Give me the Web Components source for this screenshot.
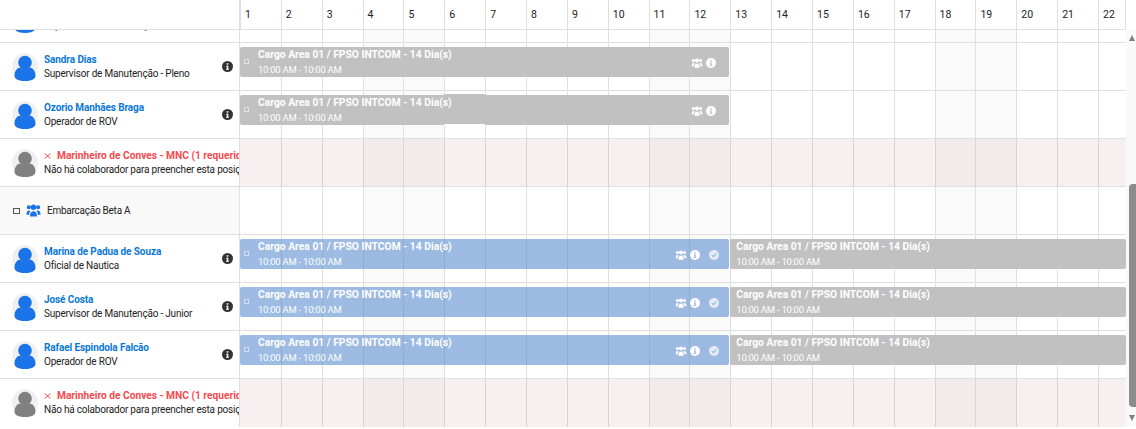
<!DOCTYPE html>
<html lang="pt"><head><meta charset="utf-8"><title>Escala</title>
<style>
html,body{margin:0;padding:0;background:#fff;overflow:hidden}
body{width:1136px;height:429px;font-family:Roboto,"Open Sans",sans-serif;color:#333}
</style></head><body>
<x-app>
  <x-header slot="header"></x-header>
  <x-row slot="rows" kind="person" name="Sandra Dias" role="Supervisor de Manutenção" first></x-row>
  <x-row slot="rows" kind="person" name="Sandra Dias" role="Supervisor de Manutenção - Pleno" bars="grey-full"></x-row>
  <x-row slot="rows" kind="person" name="Ozorio Manhães Braga" role="Operador de ROV" bars="grey-full" step></x-row>
  <x-row slot="rows" kind="vacant"></x-row>
  <x-row slot="rows" kind="group" name="Embarcação Beta A"></x-row>
  <x-row slot="rows" kind="person" name="Marina de Padua de Souza" role="Oficial de Nautica" bars="blue"></x-row>
  <x-row slot="rows" kind="person" name="José Costa" role="Supervisor de Manutenção - Junior" bars="blue"></x-row>
  <x-row slot="rows" kind="person" name="Rafael Espindola Falcão" role="Operador de ROV" bars="blue"></x-row>
  <x-row slot="rows" kind="vacant" last></x-row>
</x-app>
<script>
const COLS = 22, SHADE = new Set([4,5,11,12,18,19]), CW = 40.86;
const groupPath = 'M4 3a2.500 2.500 0 1 0 5 0a2.500 2.500 0 1 0-5 0zM.3 3a1.900 1.900 0 1 0 3.800 0a1.900 1.900 0 1 0-3.800 0zM8.900 3a1.900 1.900 0 1 0 3.800 0a1.900 1.900 0 1 0-3.800 0zM0 9.500c0-2.300 1-3.500 2.400-3.500.6 0 1 .2 1.400.5-.9.8-1.300 2-1.300 3.500H.5c-.3 0-.5-.2-.5-.5zM3.300 11c0-2.800 1.300-4.400 3.200-4.400S9.700 8.200 9.700 11c0 .4-.2.6-.6.6H3.900c-.4 0-.6-.2-.6-.6zM13 9.500c0-2.300-1-3.500-2.400-3.500-.6 0-1 .2-1.400.5.9.8 1.300 2 1.300 3.500h2c.3 0 .5-.2.5-.5z';
const infoSvg = (fg, bg, s) => `<svg width="${s}" height="${s}" viewBox="0 0 10 10" aria-hidden="true"><circle cx="5" cy="5" r="5" fill="${bg}"/><rect x="4.300" y="2" width="1.400" height="1.400" fill="${fg}"/><path d="M3.800 4.300h1.900v2.800h.6v.9H3.700v-.9h.7V5.200h-.6z" fill="${fg}"/></svg>`;
const sheet = css => `<style>${css}</style>`;

class XApp extends HTMLElement {
  constructor(){super();this.attachShadow({mode:'open'}).innerHTML = sheet(`
    :host{display:flex;width:1136px;height:429px;overflow:hidden;position:relative}
    .main{width:1126px;display:flex;flex-direction:column;flex:none}
    .rows{height:399px;overflow:hidden}
    x-scroll{flex:none}
  `)+`<div class="main"><slot name="header"></slot><div class="rows"><slot name="rows"></slot></div></div><x-scroll></x-scroll>`;}
}
class XScroll extends HTMLElement {
  constructor(){super();this.attachShadow({mode:'open'}).innerHTML = sheet(`
    :host{display:flex;flex-direction:column;width:10px;height:429px;box-sizing:border-box;padding:35px 0 8px 3px;background:linear-gradient(#fff 0 30px,#f9f9f9 30px 426px,#fff 426px)}
    .up,.down{width:0;height:0;border-left:3.500px solid transparent;border-right:3.500px solid transparent}
    .up{border-bottom:6px solid #808080}
    .down{border-top:6px solid #808080;margin-top:8px}
    .gap{height:143px}
    .thumb{height:223px;background:#8c8c8c;border-radius:4px 0 0 4px}
  `)+`<div class="up"></div><div class="gap"></div><div class="thumb"></div><div class="down"></div>`;}
}
class XHeader extends HTMLElement {
  constructor(){super();
    const cells = Array.from({length:COLS},(_,i)=>`<div class="c">${i+1}</div>`).join('');
    this.attachShadow({mode:'open'}).innerHTML = sheet(`
    :host{display:flex;height:30px;box-sizing:border-box;border-bottom:1px solid #e0e0e0;flex:none;overflow:hidden;border-right:1px solid #e0e0e0}
    .l{width:240px;flex:none;box-sizing:border-box;border-right:1px solid #e0e0e0}
    .c{width:${CW}px;flex:none;box-sizing:border-box;border-left:1px solid #e0e0e0;padding:8px 0 0 4px;font-size:10.500px;line-height:14px;color:#222}
    .c:first-of-type{border-left:0;padding-left:5px}
  `)+`<div class="l"></div>${cells}`;}
}
class XAvatar extends HTMLElement {
  constructor(){super();
    const col = this.getAttribute('color')||'#1a73e8';
    this.attachShadow({mode:'open'}).innerHTML = sheet(`:host{display:block;width:26px;height:28px;flex:none}svg{display:block}`)+
    `<svg width="26" height="28" viewBox="0 0 26 28" aria-hidden="true"><ellipse cx="13" cy="14" rx="13" ry="14" fill="#f0f0f0"/><circle cx="13" cy="9.500" r="6.800" fill="${col}"/><path d="M2.500 23c0-5.500 3-8.500 6-8.500 1.200.9 2.800 1.400 4.500 1.400s3.300-.5 4.500-1.400c3 0 6 3 6 8.500 0 3-4.500 5-10.500 5S2.500 26 2.500 23z" fill="${col}"/></svg>`;}
}
class XInfo extends HTMLElement {
  constructor(){super();this.attachShadow({mode:'open'}).innerHTML = sheet(`:host{display:block;width:11px;height:11px;flex:none}svg{display:block}`)+infoSvg('#fff','#333',11);}
}
class XBar extends HTMLElement {
  constructor(){super();
    const blue = this.hasAttribute('blue'), check = this.hasAttribute('check'), icons = this.hasAttribute('icons'), box = this.hasAttribute('box'), step=this.hasAttribute('step');
    const bg = blue ? 'rgba(59,119,199,.5)' : '#c1c1c1';
    const grp = `<svg class="g" width="12" height="10" viewBox="0 0 13 12" aria-hidden="true"><path d="${groupPath}" fill="#fff"/></svg>`;
    const chk = `<svg class="k" width="10" height="10" viewBox="0 0 10 10" aria-hidden="true"><circle cx="5" cy="5" r="5" fill="#e4ebf6"/><path d="M2.800 5.100l1.600 1.500 2.800-3" fill="none" stroke="${'#9dbbe3'}" stroke-width="1.200"/></svg>`;
    this.attachShadow({mode:'open'}).innerHTML = sheet(`
    :host{position:absolute;top:4px;height:30px;left:${this.getAttribute('x')}px;width:${this.getAttribute('w')}px;display:flex;align-items:center;box-sizing:border-box;background:${bg};border-radius:2px;color:#fff;padding-right:${check?10:13}px}
    .box{width:5px;height:5px;box-sizing:border-box;border:1px solid rgba(255,255,255,.55);position:absolute;left:4px;top:12px}
    .t{position:absolute;left:${box?18:6}px;top:1px;white-space:nowrap}
    .a{font-size:10.300px;font-weight:700;line-height:14px}
    .b{font-size:9.500px;line-height:14px;margin-top:1px;letter-spacing:-.25px}
    .ic{margin-left:auto;display:flex;align-items:center;gap:3px;margin-top:1px}
    .g{display:block}.i,.k{display:block}
    .k{margin-left:6px}
    .step{position:absolute;left:204.300px;width:40.900px;top:-1px;height:30px;background:#c1c1c1}
    .step::after{content:"";position:absolute;left:0;right:0;top:30px;height:1px;background:#fff}
  `)+(step?'<div class="step"></div>':'')+(box?'<div class="box"></div>':'')+
    `<div class="t"><div class="a">Cargo Area 01 / FPSO INTCOM - 14 Dia(s)</div><div class="b">10:00 AM - 10:00 AM</div></div>`+
    (icons?`<div class="ic">${grp}<span class="i">${infoSvg(blue?'#9dbbe3':'#c1c1c1','#fff',10)}</span>${check?chk:''}</div>`:'');}
}
class XRow extends HTMLElement {
  constructor(){super();
    const kind=this.getAttribute('kind'), name=this.getAttribute('name')||'', role=this.getAttribute('role')||'', bars=this.getAttribute('bars'), step=this.hasAttribute('step');
    const cells = Array.from({length:COLS},(_,i)=>`<div class="c${SHADE.has(i+1)?' s':''}"></div>`).join('');
    let left='';
    if(kind==='person') left=`<x-avatar></x-avatar><div class="tx"><div class="n">${name}</div><div class="r">${role}</div></div><x-info></x-info>`;
    if(kind==='vacant') left=`<x-avatar color="#808080"></x-avatar><div class="tx"><div class="n red"><svg class="x" width="7" height="6" viewBox="0 0 7 6" aria-hidden="true"><path d="M.5.3l6 5.400M6.500.3l-6 5.400" stroke="#f44b50" stroke-width="1" fill="none"/></svg>Marinheiro de Conves - MNC (1 requerido)</div><div class="r">Não há colaborador para preencher esta posição</div></div>`;
    if(kind==='group') left=`<span class="cb"></span><svg class="gi" width="15" height="13" viewBox="0 0 13 12" aria-hidden="true"><path d="${groupPath}" fill="#1a73e8"/></svg><span class="gt">${name}</span>`;
    let b='';
    if(bars==='grey-full') b=`<x-bar x="0" w="488.600" box icons ${step?'step':''}></x-bar>`;
    if(bars==='blue') b=`<x-bar x="0" w="488.600" blue box icons check></x-bar><x-bar x="490.300" w="396"></x-bar>`;
    this.attachShadow({mode:'open'}).innerHTML = sheet(`
    :host{display:flex;height:48px;box-sizing:border-box;border-bottom:1px solid #e0e0e0;overflow:hidden;flex:none}
    :host([first]){margin-top:-35px}
    :host([last]){border-bottom:0}
    .l{width:240px;flex:none;box-sizing:border-box;overflow:hidden;display:flex;align-items:center;padding-left:12px;border-right:1px solid #e0e0e0;background:${kind==='group'?'#f9f9f9':'#fff'}}
    .tx{margin-left:6px;flex:1;min-width:0;white-space:nowrap;font-size:10px;line-height:14px;color:#222;letter-spacing:-.2px}
    .n{color:#0a78d7;font-weight:700;letter-spacing:-.1px}
    .n.red{color:#f44b50;font-size:10.200px;letter-spacing:0}
    .x{display:inline-block;margin-right:6px}
    x-info{margin-right:6px}
    .cb{width:7px;height:6px;box-sizing:border-box;border:1px solid #555;margin:1px 0 0 1px;flex:none}
    .gi{margin-left:6px;flex:none}
    .gt{margin-left:6px;font-size:10px;color:#222;white-space:nowrap;letter-spacing:-.25px}
    .t{flex:1;position:relative;display:flex;overflow:hidden;min-width:0}
    .c{width:${CW}px;flex:none;box-sizing:border-box;border-left:1px solid #e0e0e0}
    .c:first-child{border-left:0}
    .s{background:#fafafa}
    .pink{position:absolute;inset:0;background:rgba(180,90,90,.09)}
  `)+`<div class="l">${left}</div><div class="t">${cells}${kind==='vacant'?'<div class="pink"></div>':''}${b}</div>`;}
}
customElements.define('x-scroll',XScroll);
customElements.define('x-header',XHeader);
customElements.define('x-avatar',XAvatar);
customElements.define('x-info',XInfo);
customElements.define('x-bar',XBar);
customElements.define('x-row',XRow);
customElements.define('x-app',XApp);
</script>
</body></html>
